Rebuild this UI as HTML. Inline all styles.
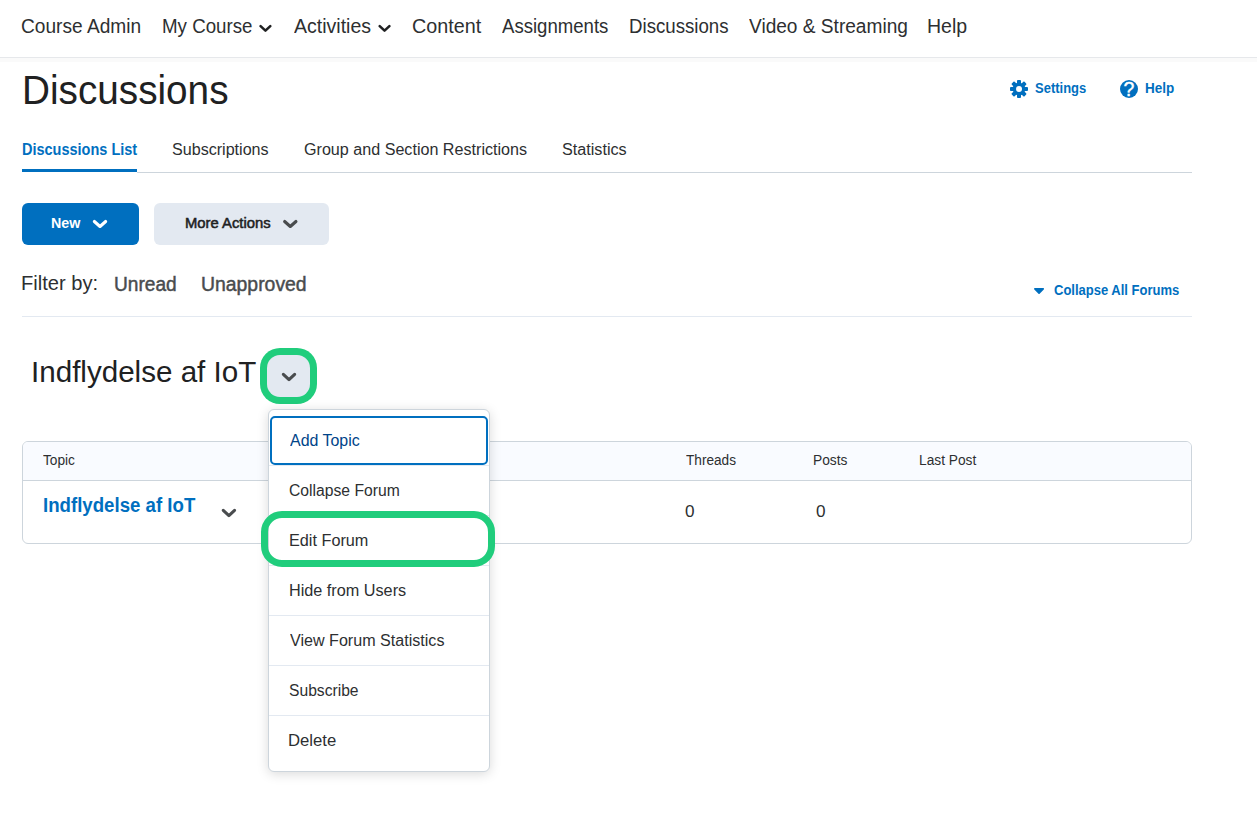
<!DOCTYPE html>
<html lang="en">
<head>
<meta charset="utf-8">
<title>Discussions</title>
<style>
html,body{margin:0;padding:0;background:#fff;}
body{width:1257px;height:826px;position:relative;overflow:hidden;font-family:"Liberation Sans",sans-serif;}
.t{position:absolute;display:block;margin:0;padding:0;white-space:nowrap;line-height:1;transform-origin:0 0;font-family:"Liberation Sans",sans-serif;text-decoration:none;}
.abs{position:absolute;}
#navline{left:0;top:57px;width:1257px;height:1px;background:#e6e8eb;}
#navshadow{left:0;top:58px;width:1257px;height:4px;background:#fafafa;}
#tabbar{left:22px;top:169px;width:115px;height:3px;background:#006fbf;}
#tabline{left:137px;top:172px;width:1055px;height:1px;background:#cdd5dc;}
#btnnew{left:22px;top:203px;width:117px;height:42px;background:#006fbf;border-radius:6px;}
#btnmore{left:154px;top:203px;width:175px;height:42px;background:#e3e9f1;border-radius:6px;}
#filterline{left:22px;top:316px;width:1170px;height:1px;background:#e3e9f1;}
#table{left:22px;top:441px;width:1168px;height:101px;border:1px solid #cdd5dc;border-radius:6px;background:#fff;overflow:hidden;}
#thead{left:0;top:0;width:1168px;height:38px;background:#f9fbff;border-bottom:1px solid #cdd5dc;}
#hl1{left:267px;top:355px;width:43px;height:42px;background:#e3e9f1;border-radius:13px;box-shadow:0 0 0 7px #20cd7c;}
#menu{left:268px;top:409px;width:220px;height:361px;border:1px solid #cdd5dc;border-radius:6px;background:#fff;box-shadow:0 2px 12px 0 rgba(0,0,0,.15);}
.sep{left:269px;width:220px;height:1px;background:#e3e9f1;}
#focus{left:270px;top:416px;width:214px;height:45px;border:2px solid #006fbf;border-radius:5px;}
#hl2{left:261px;top:511px;width:220px;height:42px;border:7px solid #20cd7c;border-radius:21px;}
svg{position:absolute;left:0;top:0;overflow:visible;pointer-events:none;}

</style>
</head>
<body>
<header>
<nav aria-label="Course navigation">
<a class="t" style="left:21.24px;top:16px;font-size:20px;font-weight:400;color:#2d2f31;transform:scaleX(0.9558);">Course Admin</a>
<a class="t" style="left:161.56px;top:16px;font-size:20px;font-weight:400;color:#2d2f31;transform:scaleX(0.9351);">My Course</a>
<a class="t" style="left:294.00px;top:16px;font-size:20px;font-weight:400;color:#2d2f31;transform:scaleX(0.9764);">Activities</a>
<a class="t" style="left:411.71px;top:16px;font-size:20px;font-weight:400;color:#2d2f31;transform:scaleX(0.9870);">Content</a>
<a class="t" style="left:502.40px;top:16px;font-size:20px;font-weight:400;color:#2d2f31;transform:scaleX(0.9292);">Assignments</a>
<a class="t" style="left:628.67px;top:16px;font-size:20px;font-weight:400;color:#2d2f31;transform:scaleX(0.9333);">Discussions</a>
<a class="t" style="left:749.26px;top:16px;font-size:20px;font-weight:400;color:#2d2f31;transform:scaleX(0.9548);">Video &amp; Streaming</a>
<a class="t" style="left:927.29px;top:16px;font-size:20px;font-weight:400;color:#2d2f31;transform:scaleX(0.9766);">Help</a>
<svg width="1257" height="60" viewBox="0 0 1257 60" aria-hidden="true">
  <g fill="none" stroke="#202122" stroke-width="2.6" stroke-linecap="round" stroke-linejoin="round">
    <path d="M260.6 26.1 L265.45 30.6 L270.3 26.1"/>
    <path d="M379.7 26.1 L384.55 30.6 L389.4 26.1"/>
  </g>
</svg>
</nav>
<div class="abs" id="navline"></div>
<div class="abs" id="navshadow"></div>
</header>
<main>
<section class="pagehead">
<h1 class="t" style="left:21.76px;top:70px;font-size:40px;font-weight:400;color:#202122;transform:scaleX(0.9677);">Discussions</h1>
<a class="t" style="left:1034.84px;top:81px;font-size:14px;font-weight:700;color:#006fbf;transform:scaleX(0.9272);">Settings</a>
<a class="t" style="left:1144.74px;top:81px;font-size:14px;font-weight:700;color:#006fbf;transform:scaleX(0.9635);">Help</a>
<svg width="1257" height="826" viewBox="0 0 1257 826" aria-hidden="true">
  <!-- gear icon -->
  <g transform="translate(1019 89)" fill="#006fbf">
    <circle r="6.3"/>
    <rect x="-2" y="-9" width="4" height="6" rx="0.9"/>
    <rect x="-2" y="-9" width="4" height="6" rx="0.9" transform="rotate(45)"/>
    <rect x="-2" y="-9" width="4" height="6" rx="0.9" transform="rotate(90)"/>
    <rect x="-2" y="-9" width="4" height="6" rx="0.9" transform="rotate(135)"/>
    <rect x="-2" y="-9" width="4" height="6" rx="0.9" transform="rotate(180)"/>
    <rect x="-2" y="-9" width="4" height="6" rx="0.9" transform="rotate(225)"/>
    <rect x="-2" y="-9" width="4" height="6" rx="0.9" transform="rotate(270)"/>
    <rect x="-2" y="-9" width="4" height="6" rx="0.9" transform="rotate(315)"/>
    <circle r="3" fill="#ffffff"/>
  </g>
  <!-- help icon -->
  <g transform="translate(1129 89)">
    <circle r="9" fill="#006fbf"/>
    <text x="0" y="7" text-anchor="middle" font-family="Liberation Sans, sans-serif" font-size="19.5" font-weight="400" fill="#ffffff" stroke="#ffffff" stroke-width="0.4">?</text>
  </g>
</svg>
</section>
<div class="tabs" role="tablist">
<a class="t" style="left:21.89px;top:142px;font-size:16px;font-weight:700;color:#006fbf;transform:scaleX(0.9056);">Discussions List</a>
<a class="t" style="left:172.15px;top:142px;font-size:16px;font-weight:400;color:#2d2f31;transform:scaleX(1.0058);">Subscriptions</a>
<a class="t" style="left:304.04px;top:142px;font-size:16px;font-weight:400;color:#2d2f31;transform:scaleX(1.0073);">Group and Section Restrictions</a>
<a class="t" style="left:562.14px;top:142px;font-size:16px;font-weight:400;color:#2d2f31;transform:scaleX(1.0104);">Statistics</a>
<div class="abs" id="tabbar"></div>
<div class="abs" id="tabline"></div>
</div>
<div class="toolbar">
<div class="abs" id="btnnew"></div>
<div class="abs" id="btnmore"></div>
<svg width="1257" height="826" viewBox="0 0 1257 826" aria-hidden="true">
  <g fill="none" stroke-width="3.1" stroke-linecap="round" stroke-linejoin="round">
    <path stroke="#ffffff" d="M94.35 221.5 L100 226.5 L105.65 221.5"/>
    <path stroke="#494c4e" d="M284.65 221.5 L290.3 226.5 L295.95 221.5"/>
  </g>
</svg>
<span class="t" style="left:51.48px;top:216px;font-size:14px;font-weight:700;color:#ffffff;transform:scaleX(1.0198);">New</span>
<span class="t" style="left:184.54px;top:216px;font-size:14px;font-weight:400;color:#202122;transform:scaleX(1.0571);-webkit-text-stroke:0.5px #202122;">More Actions</span>
</div>
<div class="filters">
<span class="t" style="left:21.04px;top:273px;font-size:20px;font-weight:400;color:#2d2f31;transform:scaleX(1.0068);">Filter by:</span>
<a class="t" style="left:113.50px;top:274px;font-size:20px;font-weight:400;color:#494c4e;transform:scaleX(0.9565);-webkit-text-stroke:0.45px #494c4e;">Unread</a>
<a class="t" style="left:200.59px;top:274px;font-size:20px;font-weight:400;color:#494c4e;transform:scaleX(0.9696);-webkit-text-stroke:0.45px #494c4e;">Unapproved</a>
<a class="t" style="left:1054.24px;top:283px;font-size:14px;font-weight:700;color:#006fbf;transform:scaleX(0.9286);">Collapse All Forums</a>
<svg width="1257" height="826" viewBox="0 0 1257 826" aria-hidden="true">
  <path d="M1034.85 288.85 L1043.25 288.85 L1039.05 293.15 Z" fill="#006fbf" stroke="#006fbf" stroke-width="1.6" stroke-linejoin="round"/>
</svg>
<div class="abs" id="filterline"></div>
</div>
<section class="forum">
<h2 class="t" style="left:30.89px;top:357px;font-size:30px;font-weight:400;color:#202122;transform:scaleX(0.9862);">Indflydelse af IoT</h2>
<div class="abs" id="hl1"></div>
<div class="abs" id="table"><div class="abs" id="thead"></div></div>
<svg width="1257" height="826" viewBox="0 0 1257 826" aria-hidden="true">
  <g fill="none" stroke="#494c4e" stroke-width="3.1" stroke-linecap="round" stroke-linejoin="round">
    <path d="M283.35 374.3 L289 379.6 L294.65 374.3"/>
    <path d="M223.25 510.4 L228.9 515.6 L234.55 510.4"/>
  </g>
</svg>
<span class="t" style="left:43.26px;top:453px;font-size:14px;font-weight:400;color:#2d2f31;transform:scaleX(0.9781);">Topic</span>
<span class="t" style="left:685.56px;top:453px;font-size:14px;font-weight:400;color:#2d2f31;transform:scaleX(0.9723);">Threads</span>
<span class="t" style="left:812.97px;top:453px;font-size:14px;font-weight:400;color:#2d2f31;transform:scaleX(0.9835);">Posts</span>
<span class="t" style="left:919.07px;top:453px;font-size:14px;font-weight:400;color:#2d2f31;transform:scaleX(0.9807);">Last Post</span>
<a class="t" style="left:42.73px;top:495px;font-size:20px;font-weight:700;color:#006fbf;transform:scaleX(0.9321);">Indflydelse af IoT</a>
<span class="t" style="left:685.26px;top:504px;font-size:16px;font-weight:400;color:#2d2f31;transform:scaleX(1.0710);">0</span>
<span class="t" style="left:816.36px;top:504px;font-size:16px;font-weight:400;color:#2d2f31;transform:scaleX(1.0710);">0</span>
</section>
<div class="dropdown" role="menu">
<div class="abs" id="menu"></div>
<div class="abs sep" style="top:465px"></div>
<div class="abs sep" style="top:515px"></div>
<div class="abs sep" style="top:565px"></div>
<div class="abs sep" style="top:615px"></div>
<div class="abs sep" style="top:665px"></div>
<div class="abs sep" style="top:715px"></div>
<div class="abs" id="focus"></div>
<div class="abs" id="hl2"></div>
<a class="t" style="left:289.80px;top:433px;font-size:16px;font-weight:400;color:#004489;transform:scaleX(0.9957);">Add Topic</a>
<a class="t" style="left:289.16px;top:483px;font-size:16px;font-weight:400;color:#2d2f31;transform:scaleX(0.9807);">Collapse Forum</a>
<a class="t" style="left:288.63px;top:533px;font-size:16px;font-weight:400;color:#2d2f31;transform:scaleX(1.0145);">Edit Forum</a>
<a class="t" style="left:288.63px;top:583px;font-size:16px;font-weight:400;color:#2d2f31;transform:scaleX(1.0136);">Hide from Users</a>
<a class="t" style="left:289.80px;top:633px;font-size:16px;font-weight:400;color:#2d2f31;transform:scaleX(1.0059);">View Forum Statistics</a>
<a class="t" style="left:289.07px;top:683px;font-size:16px;font-weight:400;color:#2d2f31;transform:scaleX(0.9778);">Subscribe</a>
<a class="t" style="left:288.49px;top:733px;font-size:16px;font-weight:400;color:#2d2f31;transform:scaleX(1.0441);">Delete</a>
</div>
</main>

</body>
</html>
